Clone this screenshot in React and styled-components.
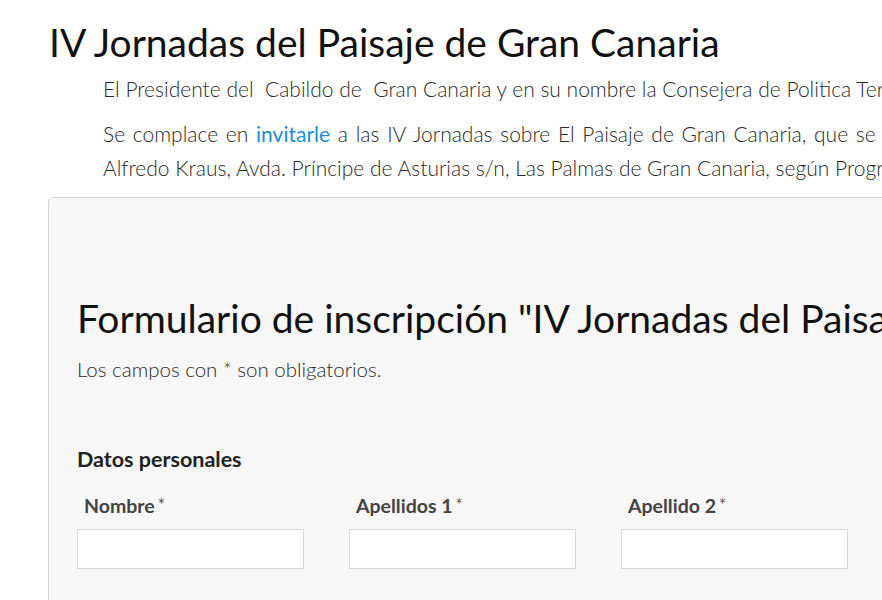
import styled, { createGlobalStyle } from "styled-components";

const GlobalStyle = createGlobalStyle`
  html, body {
    margin: 0;
    padding: 0;
    background: #ffffff;
    overflow: hidden;
  }
  body {
    font-family: Lato, "Open Sans", "Liberation Sans", sans-serif;
    color: #333;
  }
`;

const Page = styled.div`
  width: 1400px;
  min-height: 600px;
  box-sizing: border-box;
  padding: 18px 0 0 48px;
`;

const Title = styled.h1`
  margin: 0 0 0 1px;
  font-size: 39px;
  font-weight: 400;
  line-height: 48px;
  color: #111;
`;

const Intro = styled.div`
  padding-left: 55px;
  margin-top: 6px;
`;

const Para = styled.p`
  margin: 0 0 ${p => p.$gap || 0}px 0;
  font-size: 21px;
  font-weight: 300;
  line-height: 34px;
  color: #2a2a2a;
  white-space: nowrap;
`;

// justified line of the paragraph: wider word gaps
const Spread = styled.span`
  word-spacing: 2px;
`;

const Link = styled.a`
  color: #1a8fd6;
  font-weight: 400;
  text-decoration: none;
`;

const Card = styled.section`
  margin-top: 12px;
  background: #f7f7f7;
  border: 1px solid #d4d4d4;
  border-radius: 5px;
  padding: 96px 28px 40px;
`;

const FormTitle = styled.h2`
  margin: 0;
  font-size: 39px;
  font-weight: 400;
  line-height: 48px;
  color: #111;
  white-space: nowrap;
`;

const Note = styled.p`
  margin: 13px 0 0;
  font-size: 20.5px;
  font-weight: 300;
  line-height: 28px;
  color: #2a2a2a;
`;

const Section = styled.h3`
  margin: 62px 0 0;
  font-size: 21.5px;
  font-weight: 700;
  line-height: 28px;
  color: #222;
`;

const Row = styled.div`
  display: flex;
  gap: 45px;
  margin-top: 20px;
`;

const Field = styled.div`
  display: flex;
  flex-direction: column;
  width: 227px;
`;

const Label = styled.label`
  font-size: 19.5px;
  font-weight: 700;
  color: #444;
  line-height: 24px;
  padding-left: 7px;
  margin-bottom: 11px;
`;

const Star = styled.span`
  font-weight: 400;
  font-size: 17px;
  color: #555;
  margin-left: 3px;
  vertical-align: 2px;
`;

const Input = styled.input`
  height: 40px;
  box-sizing: border-box;
  border: 1px solid #d6d6d6;
  background: #fff;
  border-radius: 0;
  outline: none;
`;

const fields = ["Nombre", "Apellidos 1", "Apellido 2"];

export default function App() {
  return (
    <>
      <GlobalStyle />
      <Page>
        <Title>IV Jornadas del Paisaje de Gran Canaria</Title>
        <Intro>
          <Para $gap={11}>
            El Presidente del&nbsp; Cabildo de&nbsp; Gran Canaria y en su nombre la Consejera de Politica Territorial y Paisaje
          </Para>
          <Para>
            <Spread>
              Se complace en <Link href="#">invitarle</Link> a las IV Jornadas sobre El Paisaje de Gran Canaria, que se celebrarán en el Auditorio
            </Spread>
            <br />
            Alfredo Kraus, Avda. Príncipe de Asturias s/n, Las Palmas de Gran Canaria, según Programa adjunto.
          </Para>
        </Intro>
        <Card>
          <FormTitle>Formulario de inscripción "IV Jornadas del Paisaje de Gran Canaria"</FormTitle>
          <Note>Los campos con * son obligatorios.</Note>
          <Section>Datos personales</Section>
          <Row>
            {fields.map(f => (
              <Field key={f}>
                <Label>{f}<Star>*</Star></Label>
                <Input type="text" />
              </Field>
            ))}
          </Row>
        </Card>
      </Page>
    </>
  );
}
